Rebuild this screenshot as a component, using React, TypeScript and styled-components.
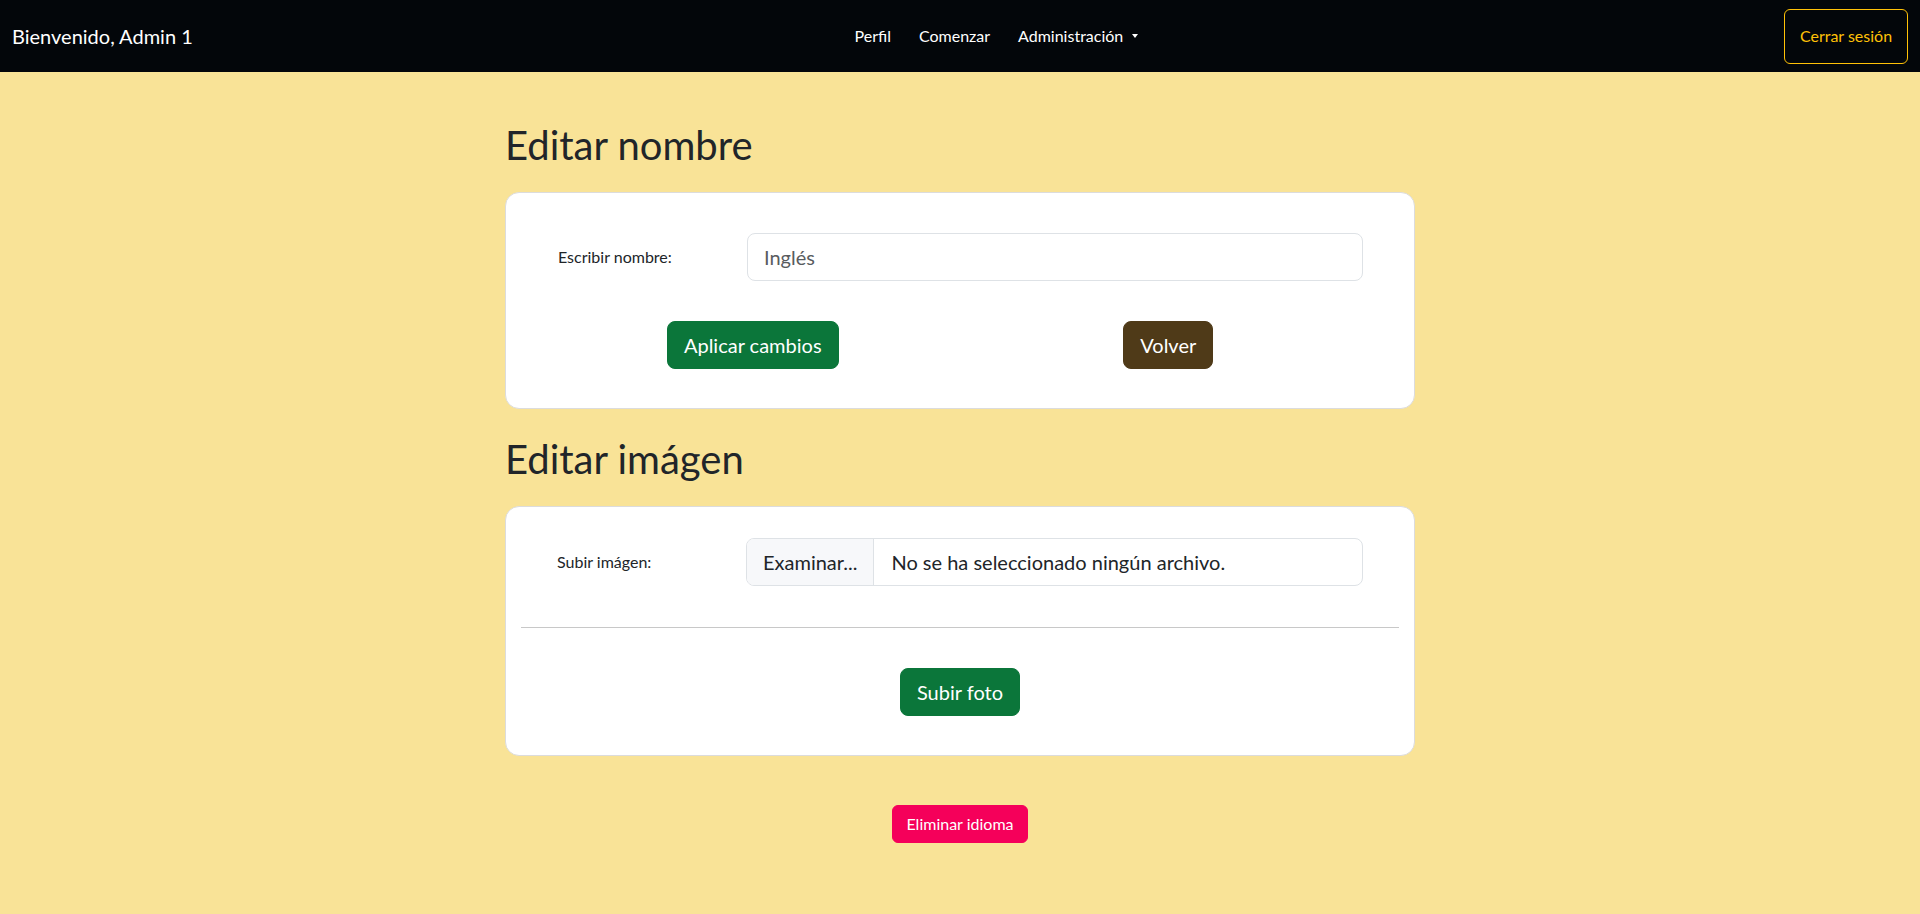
import React from "react";
import styled, { createGlobalStyle } from "styled-components";

const GlobalStyle = createGlobalStyle`
  * { box-sizing: border-box; }
  html, body { margin: 0; padding: 0; }
  body {
    background: #f9e397;
    font-family: Lato, "Open Sans", "Liberation Sans", sans-serif;
    color: #212529;
    font-size: 16px;
    line-height: 1.5;
  }
`;

const NavBar = styled.nav`
  height: 72px;
  background: #03060a;
  display: flex;
  align-items: center;
  padding: 0 12px;
`;

const Brand = styled.span`
  color: #fff;
  font-size: 20px;
  line-height: 30px;
  margin-right: 16px;
  white-space: nowrap;
`;

const NavLinks = styled.div`
  flex: 1;
  display: flex;
  justify-content: center;
  align-items: center;
`;

const NavLink = styled.a`
  color: #fff;
  font-size: 16px;
  line-height: 24px;
  padding: 8px 14px;
  text-decoration: none;
  display: inline-flex;
  align-items: center;
`;

const Caret = styled.span`
  display: inline-block;
  margin-left: 9px;
  width: 0;
  height: 0;
  border-top: 4px solid #fff;
  border-left: 3.5px solid transparent;
  border-right: 3.5px solid transparent;
`;

const LogoutButton = styled.button`
  background: transparent;
  color: #ffc107;
  border: 1px solid #ffc107;
  border-radius: 6px;
  font-family: inherit;
  font-size: 16px;
  line-height: 24px;
  height: 55px;
  padding: 0 14px;
  width: 124px;
`;

const Main = styled.main`
  width: 910px;
  margin: 0 auto;
  padding-top: 49px;
  padding-bottom: 40px;
  display: flex;
  flex-direction: column;
`;

const Heading = styled.h1<{ $first?: boolean }>`
  font-size: 40px;
  line-height: 48px;
  font-weight: 400;
  margin: ${(p) => (p.$first ? "0" : "26px")} 0 23px 0;
  color: #212529;
`;

const Card = styled.section<{ $pad: string }>`
  background: #fff;
  border: 1px solid #dcdcdc;
  border-radius: 14px;
  padding: ${(p) => p.$pad};
`;

const FormRow = styled.div<{ $inset?: string }>`
  display: grid;
  grid-template-columns: 189px 1fr;
  align-items: center;
  padding: 0 ${(p) => p.$inset || "0"};
`;

const Label = styled.label`
  font-size: 16px;
  color: #212529;
`;

const TextInput = styled.input`
  height: 48px;
  border: 1px solid #dee2e6;
  border-radius: 8px;
  padding: 0 16px;
  font-family: inherit;
  font-size: 20px;
  color: #595c5f;
  outline: none;
  width: 100%;
`;

const FileBox = styled.div`
  height: 48px;
  border: 1px solid #dee2e6;
  border-radius: 8px;
  display: flex;
  align-items: stretch;
  overflow: hidden;
  font-size: 20px;
  color: #212529;
`;

const FileButton = styled.span`
  background: #f7f8fa;
  border-right: 1px solid #dee2e6;
  padding: 0 16px;
  display: flex;
  align-items: center;
`;

const FileName = styled.span`
  padding: 0 17px;
  display: flex;
  align-items: center;
`;

const ButtonRow = styled.div`
  display: grid;
  grid-template-columns: 1fr 1fr;
  justify-items: center;
  margin: 40px -13px 0;
`;

const CenterRow = styled.div<{ $mt: number }>`
  display: flex;
  justify-content: center;
  margin-top: ${(p) => p.$mt}px;
`;

const Button = styled.button<{ $bg: string; $lg?: boolean }>`
  background: ${(p) => p.$bg};
  color: #fff;
  border: 1px solid ${(p) => p.$bg};
  border-radius: ${(p) => (p.$lg ? "8px" : "6px")};
  font-family: inherit;
  font-size: ${(p) => (p.$lg ? "20px" : "16px")};
  line-height: ${(p) => (p.$lg ? "30px" : "24px")};
  height: ${(p) => (p.$lg ? "48px" : "38px")};
  padding: ${(p) => (p.$lg ? "0 16px" : "0 13px")};
`;

const Divider = styled.hr`
  border: none;
  border-top: 1px solid #c8c8c8;
  margin: 41px 0 0;
`;

export default function App() {
  return (
    <>
      <GlobalStyle />
      <NavBar>
        <Brand>Bienvenido, Admin 1</Brand>
        <NavLinks>
          <NavLink>Perfil</NavLink>
          <NavLink>Comenzar</NavLink>
          <NavLink>
            Administración
            <Caret />
          </NavLink>
        </NavLinks>
        <LogoutButton>Cerrar sesión</LogoutButton>
      </NavBar>
      <Main>
        <Heading $first>Editar nombre</Heading>
        <Card $pad="40px 51px 39px 52px">
          <FormRow>
            <Label>Escribir nombre:</Label>
            <TextInput defaultValue="Inglés" />
          </FormRow>
          <ButtonRow>
            <Button $bg="#0b763a" $lg>
              Aplicar cambios
            </Button>
            <Button $bg="#4f3a18" $lg>
              Volver
            </Button>
          </ButtonRow>
        </Card>
        <Heading>Editar imágen</Heading>
        <Card $pad="31px 15px 39px 15px">
          <FormRow $inset="36px">
            <Label>Subir imágen:</Label>
            <FileBox>
              <FileButton>Examinar...</FileButton>
              <FileName>No se ha seleccionado ningún archivo.</FileName>
            </FileBox>
          </FormRow>
          <Divider />
          <CenterRow $mt={40}>
            <Button $bg="#0b763a" $lg>
              Subir foto
            </Button>
          </CenterRow>
        </Card>
        <CenterRow $mt={49}>
          <Button $bg="#f5005a">Eliminar idioma</Button>
        </CenterRow>
      </Main>
    </>
  );
}
